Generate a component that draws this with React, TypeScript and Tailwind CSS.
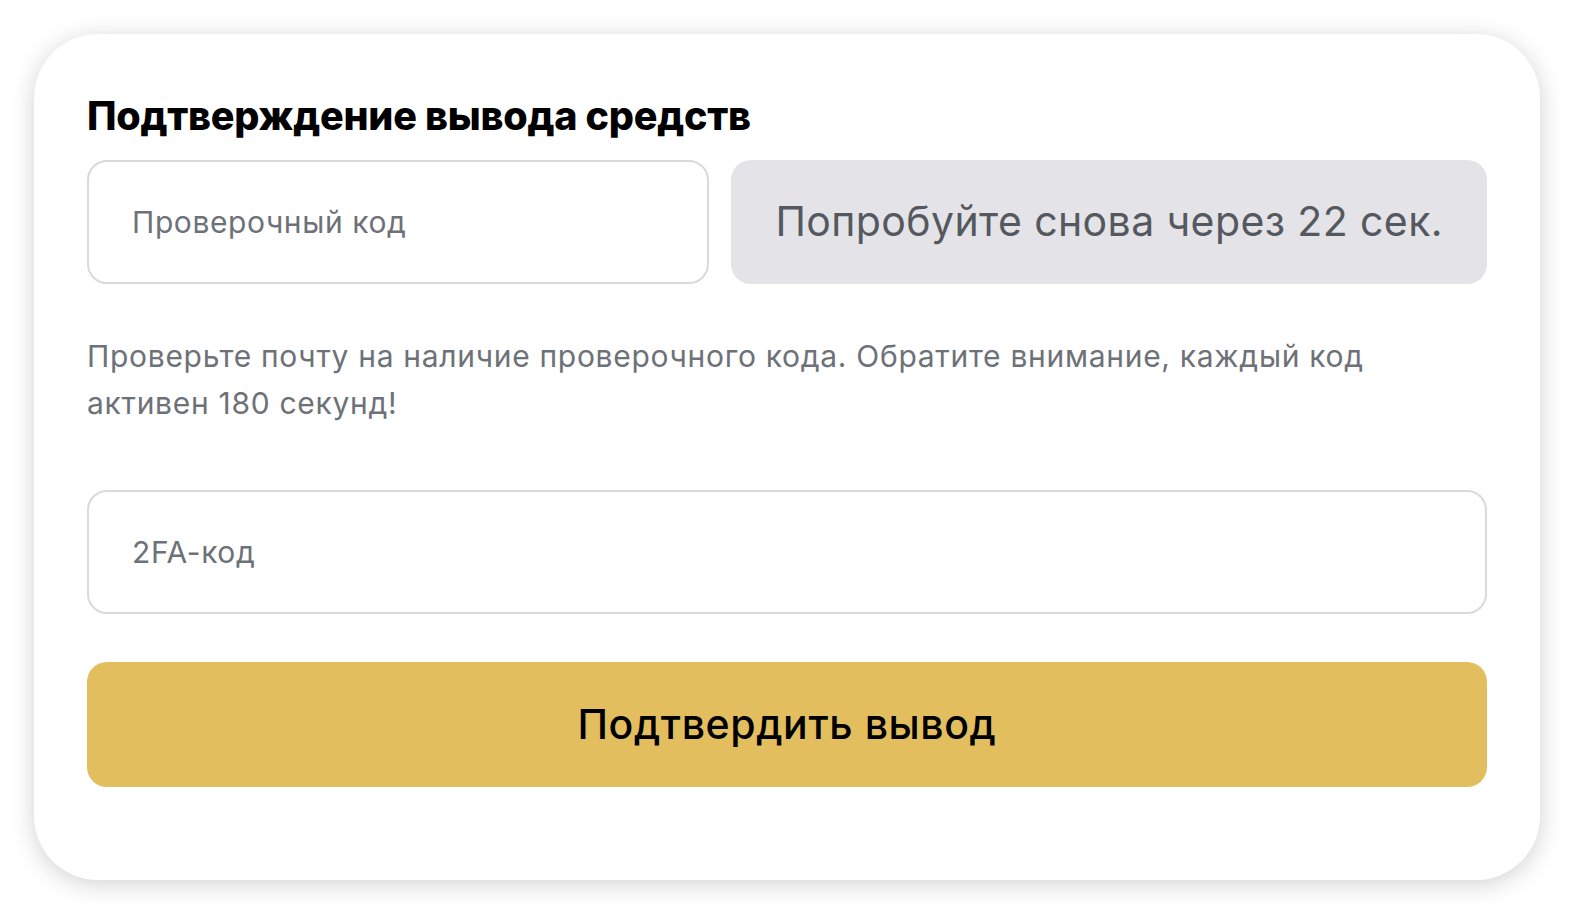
export default function App() {
  return (
    <div className="flex min-h-screen items-center justify-center bg-white p-[34px] font-['Inter',sans-serif]">
      <div className="w-full rounded-[64px] bg-white px-[53px] pt-[57px] pb-[93px] shadow-[0_4px_24px_rgba(0,0,0,0.18)]">
        <h1 className="text-[39.5px] leading-[50px] font-extrabold tracking-[-0.25px] text-black">
          Подтверждение вывода средств
        </h1>
        <div className="mt-[19px] flex gap-[22px]">
          <input
            type="text"
            placeholder="Проверочный код"
            className="h-[124px] min-w-0 flex-1 rounded-[20px] border-2 border-[#d9d9de] bg-white px-[43px] text-[30px] tracking-[0.6px] text-[#222] outline-none placeholder:text-[#6d7178]"
          />
          <button
            type="button"
            className="h-[124px] shrink-0 rounded-[20px] bg-[#e4e4e8] px-[44px] text-[41px] tracking-[0.4px] text-[#55595f]"
          >
            Попробуйте снова через 22 сек.
          </button>
        </div>
        <p className="mt-[49px] text-[30px] leading-[47px] tracking-[0.7px] text-[#6d7178]">
          Проверьте почту на наличие проверочного кода. Обратите внимание, каждый код
          <br />
          активен 180 секунд!
        </p>
        <input
          type="text"
          placeholder="2FA-код"
          className="mt-[63px] block h-[124px] w-full rounded-[20px] border-2 border-[#d9d9de] bg-white px-[43px] text-[30px] tracking-[0.6px] text-[#222] outline-none placeholder:text-[#6d7178]"
        />
        <button
          type="button"
          className="mt-[48px] block h-[125px] w-full rounded-[20px] bg-[#e2be5f] text-[41px] font-medium tracking-[0.6px] text-black"
        >
          Подтвердить вывод
        </button>
      </div>
    </div>
  );
}
